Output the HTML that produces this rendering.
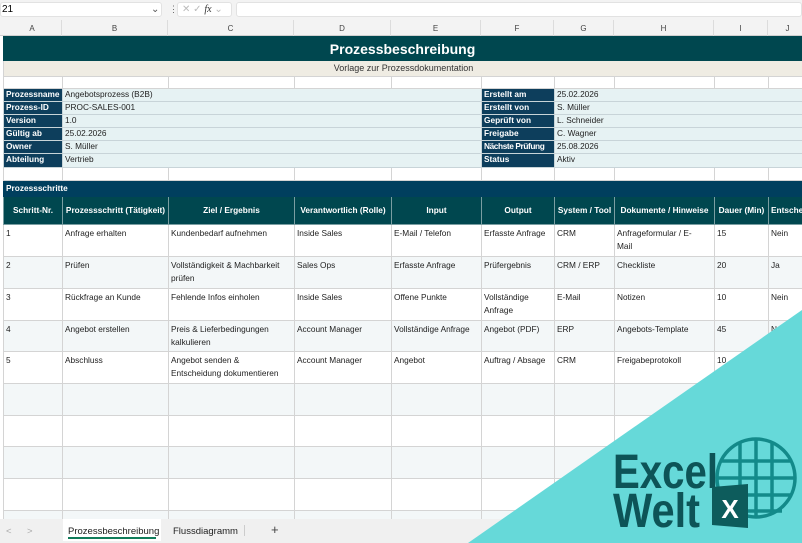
<!DOCTYPE html>
<html><head><meta charset="utf-8"><style>
*{margin:0;padding:0;box-sizing:border-box}
body{width:802px;height:543px;overflow:hidden;background:#fff;font-family:"Liberation Sans",sans-serif;position:relative}
.fb{position:absolute;left:0;top:0;width:802px;height:20px;background:#f3f3f3}
.nb{position:absolute;left:0;top:2px;width:162px;height:15px;background:#fff;border:1px solid #e2e2e2;border-radius:3px;font-size:10px;padding-left:1px;line-height:13px}
.fxb{position:absolute;left:177px;top:2px;width:55px;height:15px;background:#fff;border:1px solid #e2e2e2;border-radius:3px;font-size:10px;color:#bbb;line-height:13px;padding-left:4px}
.fin{position:absolute;left:236px;top:2px;width:566px;height:15px;background:#fff;border:1px solid #e2e2e2;border-radius:3px}
.ch{position:absolute;top:20px;left:0;height:16px;width:802px;background:#f3f3f3;border-bottom:1px solid #d0d0d0}
.ch div{position:absolute;top:0;height:16px;font-size:8px;color:#444;text-align:center;line-height:17px;border-right:1px solid #dcdcdc}
.wrap{position:absolute;left:0;top:36px;width:802px;height:483px;overflow:hidden}
table{position:absolute;left:3px;top:0;border-collapse:collapse;table-layout:fixed;width:840px;font-size:8.3px;color:#222}
td{border:1px solid #d4d4d4;padding:0 2px;overflow:hidden;white-space:nowrap;vertical-align:top;line-height:11px}
.title{background:#00474f;color:#fff;font-weight:bold;font-size:14px;text-align:center;padding-left:0;vertical-align:middle;line-height:20px;border-color:#00474f}
.sub{background:#efece3;text-align:center;font-size:9px;vertical-align:middle;color:#333}
.lb{background:#0d3e5c;color:#fff;font-weight:bold;border-color:#c8d4d8}
.vl{background:#e6f2f3;border-color:#c8d4d8}
.sec{background:#003f5e;color:#fff;font-weight:bold;border-color:#003f5e;vertical-align:middle}
.hd td{background:#00474f;color:#fff;font-weight:bold;text-align:center;vertical-align:middle;border-color:#7a9ea2}
.dr td{white-space:normal;padding-top:2px;line-height:13px}
.alt td{background:#f3f7f8}
.tabs{position:absolute;left:0;top:519px;width:802px;height:24px;background:#f0f0f0}
.tabs span{position:absolute;font-size:9.5px;color:#222;top:7px}
</style></head><body>
<div class="fb"><div class="nb">21<span style="position:absolute;left:150px;color:#555">⌄</span></div>
<span style="position:absolute;left:169px;top:4px;font-size:9px;color:#666">⋮</span>
<div class="fxb">✕ ✓ <i style="color:#333;font-family:'Liberation Serif'">fx</i> ⌄</div><div class="fin"></div></div>
<div class="ch">
<div style="left:3px;width:59px">A</div><div style="left:62px;width:106px">B</div><div style="left:168px;width:126px">C</div><div style="left:294px;width:97px">D</div><div style="left:391px;width:90px">E</div><div style="left:481px;width:73px">F</div><div style="left:554px;width:60px">G</div><div style="left:614px;width:100px">H</div><div style="left:714px;width:54px">I</div><div style="left:768px;width:40px">J</div>
</div>
<div class="wrap">
<table>
<colgroup><col style="width:59px"><col style="width:106px"><col style="width:126px"><col style="width:97px"><col style="width:90px"><col style="width:73px"><col style="width:60px"><col style="width:100px"><col style="width:54px"><col style="width:75px"></colgroup>
<tr style="height:24px"><td colspan="10" class="title"><span style="position:relative;left:-20px">Prozessbeschreibung</span></td></tr>
<tr style="height:16px"><td colspan="10" class="sub"><span style="position:relative;left:-20px">Vorlage zur Prozessdokumentation</span></td></tr>
<tr style="height:12px"><td></td><td></td><td></td><td></td><td></td><td></td><td></td><td></td><td></td><td></td></tr>
<tr style="height:13px"><td class="lb">Prozessname</td><td class="vl" colspan="4">Angebotsprozess (B2B)</td><td class="lb">Erstellt am</td><td class="vl" colspan="4">25.02.2026</td></tr>
<tr style="height:13px"><td class="lb">Prozess-ID</td><td class="vl" colspan="4">PROC-SALES-001</td><td class="lb">Erstellt von</td><td class="vl" colspan="4">S. Müller</td></tr>
<tr style="height:13px"><td class="lb">Version</td><td class="vl" colspan="4">1.0</td><td class="lb">Geprüft von</td><td class="vl" colspan="4">L. Schneider</td></tr>
<tr style="height:13px"><td class="lb">Gültig ab</td><td class="vl" colspan="4">25.02.2026</td><td class="lb">Freigabe</td><td class="vl" colspan="4">C. Wagner</td></tr>
<tr style="height:13px"><td class="lb">Owner</td><td class="vl" colspan="4">S. Müller</td><td class="lb" style="letter-spacing:-.4px">Nächste Prüfung</td><td class="vl" colspan="4">25.08.2026</td></tr>
<tr style="height:14px"><td class="lb">Abteilung</td><td class="vl" colspan="4">Vertrieb</td><td class="lb">Status</td><td class="vl" colspan="4">Aktiv</td></tr>
<tr style="height:13px"><td></td><td></td><td></td><td></td><td></td><td></td><td></td><td></td><td></td><td></td></tr>
<tr style="height:16px"><td colspan="10" class="sec">Prozessschritte</td></tr>
<tr class="hd" style="height:28px"><td>Schritt-Nr.</td><td>Prozessschritt (Tätigkeit)</td><td>Ziel / Ergebnis</td><td>Verantwortlich (Rolle)</td><td>Input</td><td>Output</td><td>System / Tool</td><td>Dokumente / Hinweise</td><td>Dauer (Min)</td><td style="text-align:left">Entscheidung</td></tr>
<tr class="dr" style="height:32px"><td>1</td><td>Anfrage erhalten</td><td>Kundenbedarf aufnehmen</td><td>Inside Sales</td><td>E-Mail / Telefon</td><td>Erfasste Anfrage</td><td>CRM</td><td>Anfrageformular / E-<br>Mail</td><td>15</td><td>Nein</td></tr>
<tr class="dr alt" style="height:32px"><td>2</td><td>Prüfen</td><td>Vollständigkeit &amp; Machbarkeit prüfen</td><td>Sales Ops</td><td>Erfasste Anfrage</td><td>Prüfergebnis</td><td>CRM / ERP</td><td>Checkliste</td><td>20</td><td>Ja</td></tr>
<tr class="dr" style="height:32px"><td>3</td><td>Rückfrage an Kunde</td><td>Fehlende Infos einholen</td><td>Inside Sales</td><td>Offene Punkte</td><td>Vollständige Anfrage</td><td>E-Mail</td><td>Notizen</td><td>10</td><td>Nein</td></tr>
<tr class="dr alt" style="height:31px"><td>4</td><td>Angebot erstellen</td><td>Preis &amp; Lieferbedingungen kalkulieren</td><td>Account Manager</td><td style="white-space:nowrap">Vollständige Anfrage</td><td>Angebot (PDF)</td><td>ERP</td><td>Angebots-Template</td><td>45</td><td>Nein</td></tr>
<tr class="dr" style="height:32px"><td>5</td><td>Abschluss</td><td>Angebot senden &amp;<br>Entscheidung dokumentieren</td><td>Account Manager</td><td>Angebot</td><td style="white-space:nowrap">Auftrag / Absage</td><td>CRM</td><td>Freigabeprotokoll</td><td>10</td><td></td></tr>
<tr class="dr alt" style="height:32px"><td></td><td></td><td></td><td></td><td></td><td></td><td></td><td></td><td></td><td></td></tr>
<tr class="dr" style="height:31px"><td></td><td></td><td></td><td></td><td></td><td></td><td></td><td></td><td></td><td></td></tr>
<tr class="dr alt" style="height:32px"><td></td><td></td><td></td><td></td><td></td><td></td><td></td><td></td><td></td><td></td></tr>
<tr class="dr" style="height:32px"><td></td><td></td><td></td><td></td><td></td><td></td><td></td><td></td><td></td><td></td></tr>
<tr class="dr alt" style="height:32px"><td></td><td></td><td></td><td></td><td></td><td></td><td></td><td></td><td></td><td></td></tr>
</table>
</div>
<div class="tabs">
<span style="left:6px;color:#aaa">&lt;</span><span style="left:27px;color:#aaa">&gt;</span>
<div style="position:absolute;left:63px;top:0;width:98px;height:22px;background:#fff"></div>
<span style="left:68px">Prozessbeschreibung</span>
<div style="position:absolute;left:68px;top:18px;width:88px;height:2px;background:#107c5a"></div>
<span style="left:173px">Flussdiagramm</span>
<div style="position:absolute;left:244px;top:6px;width:1px;height:11px;background:#ccc"></div>
<span style="left:271px;font-size:13px;top:3px;color:#444">+</span>
</div>
<svg style="position:absolute;left:0;top:0" width="802" height="543">
<polygon points="468,543 802,310 802,543" fill="#66d9d9"/>
<g stroke="#138a8a" stroke-width="3.5" fill="none">
<circle cx="756" cy="478" r="39"/>
<line x1="722" y1="461" x2="790" y2="461"/><line x1="717" y1="478" x2="795" y2="478"/><line x1="720" y1="495" x2="792" y2="495"/><line x1="730" y1="511" x2="782" y2="511"/>
<line x1="740" y1="443" x2="740" y2="514"/><line x1="756" y1="439" x2="756" y2="517"/><line x1="772" y1="443" x2="772" y2="514"/>
</g>
<text x="613" y="488" font-family="Liberation Sans" font-weight="bold" font-size="48" fill="#0d5457" textLength="105" lengthAdjust="spacingAndGlyphs">Excel</text>
<text x="613" y="527" font-family="Liberation Sans" font-weight="bold" font-size="48" fill="#0d5457" textLength="87" lengthAdjust="spacingAndGlyphs">Welt</text>
<polygon points="712,487 748,484 748,528 712,525" fill="#0d5c5c"/>
<text x="730" y="518" text-anchor="middle" font-family="Liberation Sans" font-weight="bold" font-size="26" fill="#fff">X</text>
</svg>
</body></html>
